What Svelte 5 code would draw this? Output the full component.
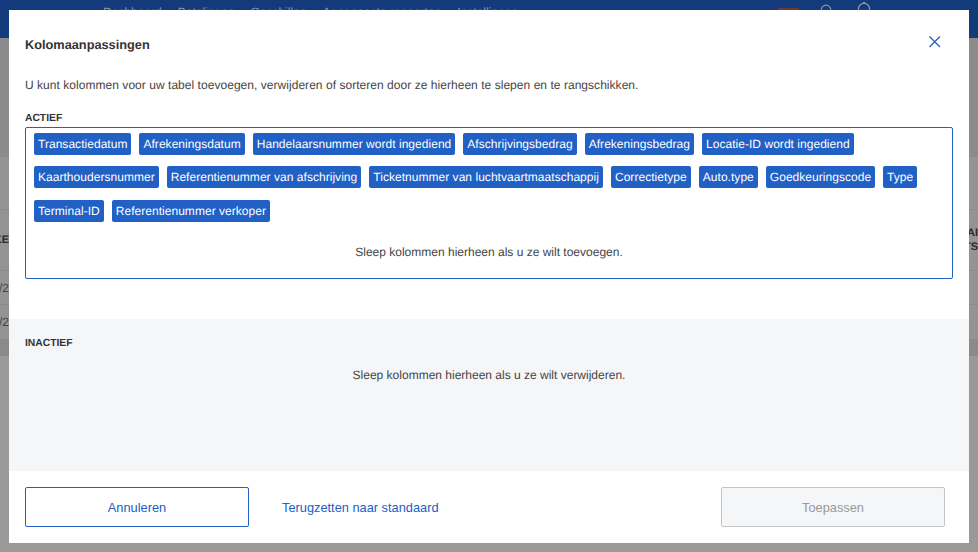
<script>
	const nav = ['Dashboard', 'Betalingen', 'Geschillen', 'Aangepaste rapporten', 'Instellingen']

	const active = [
		'Transactiedatum',
		'Afrekeningsdatum',
		'Handelaarsnummer wordt ingediend',
		'Afschrijvingsbedrag',
		'Afrekeningsbedrag',
		'Locatie-ID wordt ingediend',
		'Kaarthoudersnummer',
		'Referentienummer van afschrijving',
		'Ticketnummer van luchtvaartmaatschappij',
		'Correctietype',
		'Auto.type',
		'Goedkeuringscode',
		'Type',
		'Terminal-ID',
		'Referentienummer verkoper'
	]
</script>

<div class="page">
	<header class="topbar">
		<nav class="nav">
			{#each nav as item}
				<span>{item}</span>
			{/each}
		</nav>
		<div class="tools">
			<span class="flag"></span>
			<svg width="14" height="20" viewBox="0 0 14 20" fill="none" stroke="#8d97a8" stroke-width="1.2">
				<circle cx="7" cy="10" r="4.800" />
			</svg>
			<svg class="power" width="16" height="20" viewBox="0 0 16 20" fill="none" stroke="#8d97a8" stroke-width="1.2">
				<circle cx="8" cy="9" r="5.600" />
				<path d="M6.500 3.500 L8 2.500 L9.500 3.500" />
			</svg>
		</div>
	</header>

	<div class="band"></div>
	<div class="row toolbar"></div>
	<div class="row head">
		<span class="cell-left">KE</span>
		<span class="cell-right">TAI<br />TS</span>
	</div>
	<div class="row data"><span class="cell-left slim">/2</span></div>
	<div class="row data short"><span class="cell-left slim">/2</span></div>
	<div class="strip"></div>
</div>

<div class="modal">
	<div class="title-row">
		<h2>Kolomaanpassingen</h2>
		<button class="close" aria-label="Sluiten">
			<svg width="14" height="14" viewBox="0 0 14 14" fill="none" stroke="#2160c4" stroke-width="1.300">
				<path d="M1.500 1.500 L12 12 M12 1.500 L1.500 12" />
			</svg>
		</button>
	</div>

	<p class="intro">U kunt kolommen voor uw tabel toevoegen, verwijderen of sorteren door ze hierheen te slepen en te rangschikken.</p>

	<section class="active">
		<h3>ACTIEF</h3>
		<div class="dropbox">
			<div class="chips">
				{#each active as chip}
					<span class="chip">{chip}</span>
				{/each}
			</div>
			<p class="hint">Sleep kolommen hierheen als u ze wilt toevoegen.</p>
		</div>
	</section>

	<section class="inactive">
		<h3>INACTIEF</h3>
		<p class="hint">Sleep kolommen hierheen als u ze wilt verwijderen.</p>
	</section>

	<footer class="actions">
		<button class="cancel">Annuleren</button>
		<button class="reset">Terugzetten naar standaard</button>
		<button class="apply" disabled>Toepassen</button>
	</footer>
</div>

<style>
	:global(body) {
		margin: 0;
		background: #999;
		overflow: hidden;
		font-family: "Liberation Sans", Arial, sans-serif;
		text-rendering: geometricPrecision;
	}
	.page {
		height: 552px;
		overflow: hidden;
		color: #333;
		font-size: 12px;
	}
	.topbar {
		display: flex;
		justify-content: space-between;
		height: 38px;
		box-sizing: border-box;
		padding: 5px 106px 0 103px;
		background: #133a7a;
		color: #8d97a8;
	}
	.nav {
		display: flex;
		gap: 16px;
		line-height: 14px;
	}
	.tools {
		display: flex;
		align-items: flex-start;
		margin-top: -5px;
		gap: 20px;
	}
	.power {
		margin-left: 3px;
	}
	.flag {
		width: 21px;
		height: 14px;
		margin-top: 8px;
		background: #6b3a3a;
	}
	.band {
		height: 119px;
		background: #8b8b8b;
	}
	.row {
		display: flex;
		justify-content: space-between;
		box-sizing: border-box;
		border-bottom: 1px solid #8a8a8a;
		background: #949494;
	}
	.toolbar {
		height: 53px;
	}
	.head {
		height: 61px;
		padding-top: 16px;
		font-weight: 700;
		font-size: 11px;
		line-height: 14px;
		color: #2a2a2a;
		align-items: flex-start;
	}
	.head .cell-left {
		margin-top: 7px;
	}
	.data {
		height: 34px;
		align-items: center;
		color: #444;
	}
	.short {
		border-bottom: 0;
	}
	.cell-left {
		width: 9px;
		overflow: hidden;
		display: flex;
		justify-content: flex-end;
	}
	.cell-right {
		width: 30px;
		text-align: right;
		white-space: nowrap;
	}
	.strip {
		height: 17px;
		background: #8a8a8a;
	}
	.modal {
		position: fixed;
		top: 10px;
		left: 9px;
		width: 960px;
		height: 533px;
		display: flex;
		flex-direction: column;
		background: #fff;
		color: #333;
		font-size: 12px;
	}
	.title-row {
		display: flex;
		justify-content: space-between;
		align-items: center;
		height: 28px;
		margin-top: 20px;
		padding: 0 27px 0 16px;
	}
	.title-row .close {
		margin-top: -4px;
	}
	h2 {
		margin: 0;
		font-size: 12.750px;
		font-weight: 700;
		color: #333;
	}
	.close {
		display: flex;
		padding: 0;
		border: 0;
		background: none;
	}
	.intro {
		margin: 20px 16px 0;
		line-height: 14px;
		letter-spacing: 0.04px;
		color: #444;
	}
	h3 {
		margin: 0;
		font-size: 10.300px;
		line-height: 12px;
		font-weight: 700;
		color: #333;
	}
	.active {
		margin: 21px 16px 0;
	}
	.dropbox {
		box-sizing: border-box;
		height: 152px;
		margin-top: 2px;
		padding: 5px 8px 0;
		border: 1px solid #2160c4;
		border-radius: 2px;
	}
	.chips {
		display: flex;
		flex-wrap: wrap;
		gap: 11.400px 8px;
	}
	.chip {
		padding: 0 4px;
		height: 22px;
		line-height: 22px;
		border-radius: 2px;
		background: #2160c4;
		color: #fff;
		letter-spacing: 0.035px;
		white-space: nowrap;
	}
	.hint {
		margin: 0;
		text-align: center;
		line-height: 14px;
		color: #444;
	}
	.dropbox .hint {
		margin-top: 23px;
	}
	.inactive {
		height: 152px;
		box-sizing: border-box;
		margin-top: 40px;
		padding: 19px 16px 0;
		background: #f5f6f8;
	}
	.inactive .hint {
		margin-top: 18px;
	}
	.actions {
		display: flex;
		align-items: center;
		margin-top: 16px;
		padding: 0 24px 0 16px;
	}
	.actions button {
		font: inherit;
		font-size: 12.800px;
	}
	.cancel,
	.apply {
		width: 224px;
		height: 40px;
		border-radius: 2px;
	}
	.cancel {
		border: 1px solid #2160c4;
		background: #fff;
		color: #2160c4;
	}
	.reset {
		margin-left: 33px;
		padding: 0;
		border: 0;
		background: none;
		color: #2160c4;
	}
	.apply {
		margin-left: auto;
		border: 1px solid #c4c4c4;
		background: #f5f6f8;
		color: #999;
	}
</style>
